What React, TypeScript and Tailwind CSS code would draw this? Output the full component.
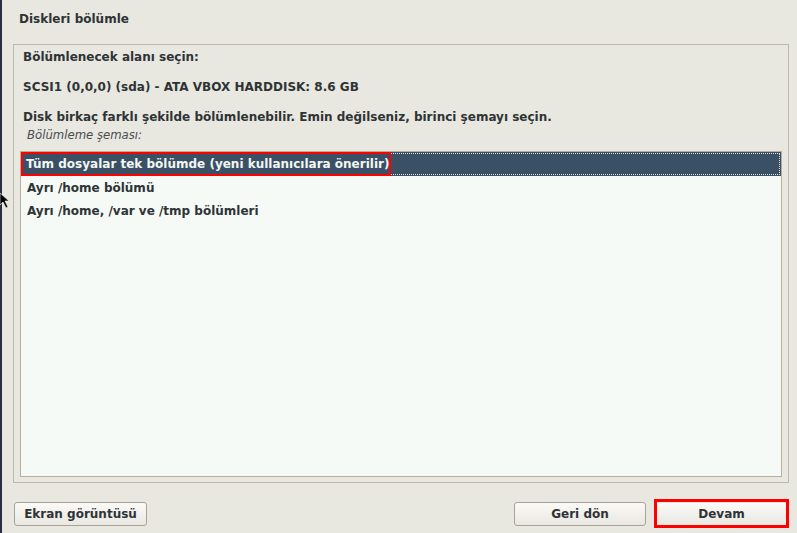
import React from "react";

const font = { fontFamily: '"DejaVu Sans", "Liberation Sans", sans-serif' };

const options = [
  "Tüm dosyalar tek bölümde (yeni kullanıcılara önerilir)",
  "Ayrı /home bölümü",
  "Ayrı /home, /var ve /tmp bölümleri",
];

function Button({ label, width, marked }: { label: string; width: string; marked?: boolean }) {
  return (
    <div className={`relative ${width}`}>
      <button
        className={`h-[24px] w-full rounded-[3px] border border-[#a8a396] bg-gradient-to-b from-[#fbfaf8] to-[#e9e7e1] text-[12px] font-bold text-[#2e3436] ${
          marked ? "border-transparent" : ""
        }`}
      >
        {label}
      </button>
      {marked && (
        <div className="pointer-events-none absolute inset-[-2px] border-[3px] border-[#ff0000]" />
      )}
    </div>
  );
}

export default function App() {
  const [selected, setSelected] = React.useState(0);

  return (
    <div
      className="relative flex h-[533px] w-[797px] overflow-hidden bg-[#e8e7e0] text-[#2e3436]"
      style={font}
    >
      <div className="w-[2px] shrink-0 bg-[#2b3040]" />

      <div className="flex flex-1 flex-col pl-[11px]">
        <div className="flex h-[44px] items-start pl-[6px] pt-[11px] text-[12px] font-bold leading-[16px]">
          Diskleri bölümle
        </div>

        <div className="flex h-[439px] w-[776px] flex-col border border-[#bdb8ab]">
          <div className="pl-[9px] pt-[4px] text-[12px] font-bold">
            <div className="h-[16px] leading-[16px]">Bölümlenecek alanı seçin:</div>
            <div className="mt-[14px] h-[16px] leading-[16px]">SCSI1 (0,0,0) (sda) - ATA VBOX HARDDISK: 8.6 GB</div>
            <div className="mt-[14px] h-[16px] leading-[16px]">
              Disk birkaç farklı şekilde bölümlenebilir. Emin değilseniz, birinci şemayı seçin.
            </div>
            <div className="mt-[2px] h-[16px] pl-[4px] text-[11.7px] font-normal italic leading-[16px] text-[#4a4d4f]">
              Bölümleme şeması:
            </div>
          </div>

          <div className="mx-[6px] mb-[5px] mt-[8px] flex-1 border border-[#bbad98] bg-[#f6faf6]">
            {options.map((o, i) => (
              <div
                key={o}
                onClick={() => setSelected(i)}
                className={`relative flex items-center text-[12px] font-bold ${
                  i === selected ? "bg-[#3a5064] text-[#f4f6f4]" : ""
                } ${i === 0 ? "h-[24px]" : "h-[23.5px] pl-[6px]"}`}
              >
                {i === selected && (
                  <div className="pointer-events-none absolute inset-[1px] border border-dotted border-[#d8dee4]" />
                )}
                {i === 0 ? (
                  <span className="relative flex h-[24px] items-center border-[2px] border-[#ff0000] pl-[3px] pr-[0px]">
                    {o}
                  </span>
                ) : (
                  <span className="relative">{o}</span>
                )}
              </div>
            ))}
          </div>
        </div>

        <div className="mt-[18px] flex items-center pr-[10px]">
          <Button label="Ekran görüntüsü" width="w-[133px] ml-[1px]" />
          <div className="flex-1" />
          <Button label="Geri dön" width="w-[132px]" />
          <div className="w-[10px]" />
          <Button label="Devam" width="w-[131px]" marked />
        </div>
      </div>

      <svg className="absolute left-0 top-[193px]" width="10" height="16" viewBox="0 0 10 16">
        <path d="M0 0 L0 12 L3 9 L6 15 L8 14 L5 8 L9 8 Z" fill="#000" stroke="#fff" strokeWidth="0.6" />
      </svg>
    </div>
  );
}
